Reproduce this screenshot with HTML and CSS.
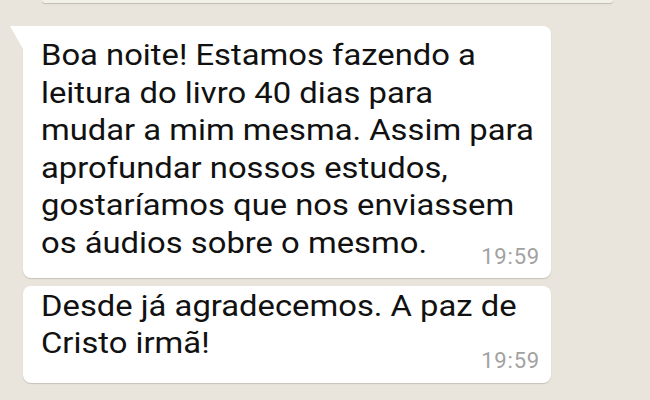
FILE: index.html
```html
<!DOCTYPE html>
<html lang="pt">
<head>
  <meta charset="UTF-8">
  <meta name="viewport" content="width=device-width, initial-scale=1.0">
  <title>Conversa</title>
  <link rel="stylesheet" href="styles.css">
</head>
<body>
  <div class="chat">
    <div class="notice"></div>

    <div class="bubble first">
      <p class="text">Boa noite! Estamos fazendo a<br>leitura do livro 40 dias para<br>mudar a mim mesma. Assim para<br>aprofundar nossos estudos,<br>gostaríamos que nos enviassem<br>os áudios sobre o mesmo.</p>
      <div class="meta">19:59</div>
    </div>

    <div class="bubble second">
      <p class="text">Desde já agradecemos. A paz de<br>Cristo irmã!</p>
      <div class="meta">19:59</div>
    </div>
  </div>
</body>
</html>
```

FILE: styles.css
```css
body {
  margin: 0;
  padding: 0;
  background-color: #e9e5dc;
  font-family: Roboto, "Noto Sans", sans-serif;
}

.chat {
  width: 650px;
  height: 400px;
  overflow: hidden;
  display: flex;
  flex-direction: column;
}

.notice {
  height: 3px;
  width: 571px;
  margin-left: 42px;
  background-color: #f3f1e6;
  box-shadow: 0 1px 1px rgba(0, 0, 0, 0.18);
  border-radius: 0 0 4px 4px;
}

.bubble {
  position: relative;
  width: 528px;
  margin-left: 23px;
  box-sizing: border-box;
  padding: 0 11px 0 18px;
  background-color: #fff;
  border-radius: 8px;
  box-shadow: 0 1px 1px rgba(0, 0, 0, 0.16);
}

.bubble.first {
  margin-top: 23px;
  padding-top: 11px;
  padding-bottom: 10px;
  border-top-left-radius: 0;
}

/* speech tail */
.bubble.first::before {
  content: "";
  position: absolute;
  top: 0;
  left: -13px;
  width: 0;
  height: 0;
  border-top: 23px solid #fff;
  border-left: 13px solid transparent;
}

.bubble.second {
  margin-top: 8px;
  padding-top: 2px;
  padding-bottom: 11px;
}

.text {
  margin: 0;
  font-size: 29px;
  line-height: 37.6px;
  color: #111;
  transform: scaleX(1.13);
  transform-origin: left center;
}

.meta {
  text-align: right;
  font-size: 22px;
  line-height: 22px;
  letter-spacing: 0.8px;
  color: #a2a2a2;
}

.first .meta {
  margin-top: -17px;
}

.second .meta {
  margin-top: -13px;
}
```
